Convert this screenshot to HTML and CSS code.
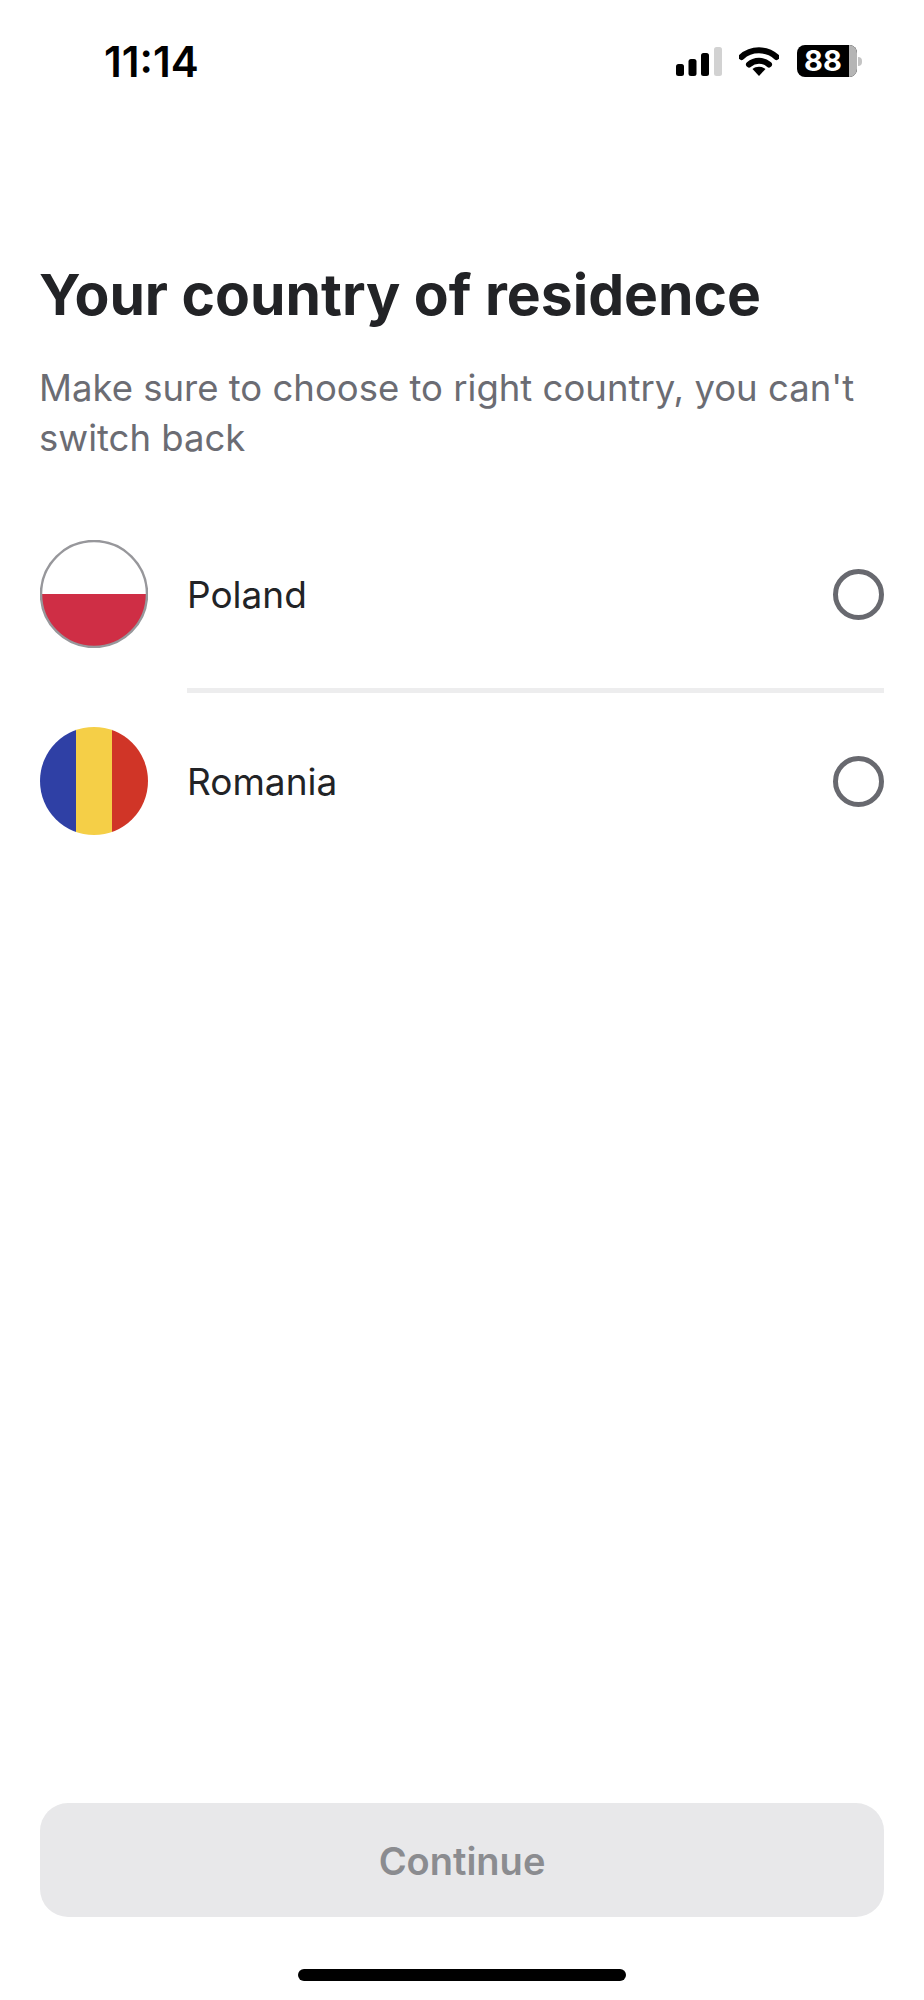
FILE: index.html
```html
<!DOCTYPE html>
<html lang="en">
<head>
    <meta charset="UTF-8">
    <meta name="viewport" content="width=device-width, initial-scale=1.0">
    <title>Your country of residence</title>
    <link rel="stylesheet" href="styles.css">
</head>
<body>
    <div class="screen">
        <header class="status-bar">
            <span class="clock">11:14</span>
            <div class="status-icons">
                <svg class="signal" width="46" height="29" viewBox="0 0 46 29">
                    <rect x="0" y="17" width="8" height="12" rx="2.5" fill="#000"/>
                    <rect x="12.5" y="12" width="8" height="17" rx="2.5" fill="#000"/>
                    <rect x="25" y="6" width="8" height="23" rx="2.5" fill="#000"/>
                    <rect x="38" y="0" width="8" height="29" rx="2.5" fill="#d2d2d2"/>
                </svg>
                <svg class="wifi" width="40" height="30" viewBox="0 0 40 30">
                    <path d="M2.5 11 C12 2 28 2 37.500 11" fill="none" stroke="#000" stroke-width="6" stroke-linecap="round"/>
                    <path d="M10 18.500 C15.500 13.500 24.500 13.500 30 18.500" fill="none" stroke="#000" stroke-width="6" stroke-linecap="round"/>
                    <path d="M13.500 23 C17 20 23 20 26.500 23 L20 30 Z" fill="#000"/>
                </svg>
                <div class="battery">
                    <div class="battery-body"><span>88</span><i class="battery-rest"></i></div>
                    <i class="battery-nub"></i>
                </div>
            </div>
        </header>

        <main class="content">
            <h1>Your country of residence</h1>
            <p class="subtitle">Make sure to choose to right country, you can't switch back</p>

            <div class="country-list">
                <div class="country-row">
                    <svg class="flag" width="108" height="108" viewBox="0 0 108 108">
                        <clipPath id="clipPl"><circle cx="54" cy="54" r="53"/></clipPath>
                        <g clip-path="url(#clipPl)">
                            <rect width="108" height="54" fill="#fff"/>
                            <rect y="54" width="108" height="54" fill="#cf2e45"/>
                        </g>
                        <circle cx="54" cy="54" r="53" fill="none" stroke="#97979b" stroke-width="2.500"/>
                    </svg>
                    <div class="country-main">
                        <span class="country-name">Poland</span>
                        <span class="radio"></span>
                    </div>
                </div>
                <div class="divider"></div>
                <div class="country-row">
                    <svg class="flag" width="108" height="108" viewBox="0 0 108 108">
                        <clipPath id="clipRo"><circle cx="54" cy="54" r="54"/></clipPath>
                        <g clip-path="url(#clipRo)">
                            <rect width="36" height="108" fill="#2f40a5"/>
                            <rect x="36" width="36" height="108" fill="#f5cf47"/>
                            <rect x="72" width="36" height="108" fill="#d03527"/>
                        </g>
                    </svg>
                    <div class="country-main">
                        <span class="country-name">Romania</span>
                        <span class="radio"></span>
                    </div>
                </div>
            </div>
        </main>

        <footer class="bottom">
            <button class="continue-btn" type="button">Continue</button>
            <div class="home-bar"></div>
        </footer>
    </div>
</body>
</html>
```

FILE: styles.css
```css
html, body {
    margin: 0;
    padding: 0;
    background: #fff;
    font-family: 'Inter', 'Noto Sans', sans-serif;
}

.screen {
    display: flex;
    flex-direction: column;
    height: 2000px;
}

.status-bar {
    display: flex;
    justify-content: space-between;
    align-items: center;
    height: 122px;
    padding: 0 62px 0 104px;
}

.clock {
    font-family: 'Inter', sans-serif;
    font-size: 42px;
    font-weight: 600;
    color: #000;
}

.status-icons {
    display: flex;
    align-items: center;
}

.wifi {
    margin: 0 18px 0 17px;
}

.battery {
    display: flex;
    align-items: center;
}

.battery-body {
    display: flex;
    align-items: stretch;
    width: 60px;
    height: 32px;
    border-radius: 8px;
    background: #000;
}

.battery-body span {
    flex: 1;
    color: #fff;
    font-family: 'Inter', sans-serif;
    font-size: 29px;
    font-weight: 700;
    line-height: 32px;
    text-align: center;
}

.battery-rest {
    width: 8px;
    border-radius: 0 8px 8px 0;
    background: #b5b5b5;
}

.battery-nub {
    width: 4px;
    height: 9px;
    margin-left: 1px;
    border-radius: 0 4px 4px 0;
    background: #c4c4c4;
}

.content {
    flex: 1;
    padding: 139px 39px 0 40px;
}

h1 {
    margin: 0 0 0 -1px;
    font-size: 57px;
    font-weight: 700;
    line-height: 68px;
    color: #222326;
}

.subtitle {
    margin: 34px 0 0 -1px;
    font-size: 36.5px;
    line-height: 50px;
    color: #6b6c73;
}

.country-list {
    margin-top: 77px;
}

.country-row {
    display: flex;
    align-items: center;
    gap: 39px;
}

.flag {
    flex: none;
}

.country-main {
    flex: 1;
    display: flex;
    justify-content: space-between;
    align-items: center;
}

.country-name {
    font-size: 37px;
    color: #222326;
}

.radio {
    box-sizing: border-box;
    width: 51px;
    height: 51px;
    margin-right: 1px;
    border: 5px solid #68696f;
    border-radius: 50%;
}

.divider {
    height: 5px;
    margin: 40px 1px 34px 147px;
    background: #ededee;
}

.bottom {
    display: flex;
    flex-direction: column;
    align-items: center;
    padding: 0 40px 19px;
}

.continue-btn {
    width: 100%;
    height: 114px;
    padding: 2px 0 0;
    border: none;
    border-radius: 28px;
    background: #e8e8ea;
    color: #8b8c90;
    font-family: inherit;
    font-size: 38px;
    font-weight: 600;
}

.home-bar {
    width: 328px;
    height: 12px;
    margin-top: 52px;
    border-radius: 6px;
    background: #000;
}
```
